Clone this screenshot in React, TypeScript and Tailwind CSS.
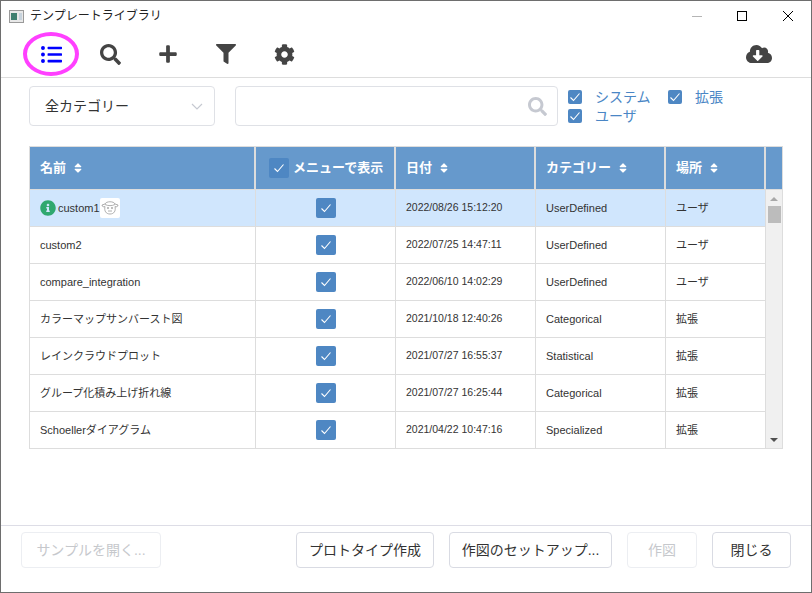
import React from 'react';
import { FaListUl, FaSearch, FaPlus, FaFilter, FaCog, FaCloudDownloadAlt, FaSort, FaInfoCircle } from 'react-icons/fa';

interface Template {
  name: string;
  date: string;
  category: string;
  place: string;
}

const templates: Template[] = [
  { name: 'custom1', date: '2022/08/26 15:12:20', category: 'UserDefined', place: 'ユーザ' },
  { name: 'custom2', date: '2022/07/25 14:47:11', category: 'UserDefined', place: 'ユーザ' },
  { name: 'compare_integration', date: '2022/06/10 14:02:29', category: 'UserDefined', place: 'ユーザ' },
  { name: 'カラーマップサンバースト図', date: '2021/10/18 12:40:26', category: 'Categorical', place: '拡張' },
  { name: 'レインクラウドプロット', date: '2021/07/27 16:55:37', category: 'Statistical', place: '拡張' },
  { name: 'グループ化積み上げ折れ線', date: '2021/07/27 16:25:44', category: 'Categorical', place: '拡張' },
  { name: 'Schoellerダイアグラム', date: '2021/04/22 10:47:16', category: 'Specialized', place: '拡張' },
];

const Check = ({ size }: { size: string }) => (
  <span className={`${size} flex shrink-0 items-center justify-center rounded-[2px] bg-[#4e87c3]`}>
    <svg viewBox="0 0 12 12" className="h-3 w-3" fill="none" stroke="white" strokeWidth="1.1">
      <path d="M1.5 6.5 L4.5 9.5 L10.5 2.5" />
    </svg>
  </span>
);

const FilterOption = ({ label }: { label: string }) => (
  <label className="flex h-[19px] items-center">
    <Check size="h-[14px] w-[14px]" />
    <span className="ml-[13px] text-[14px] leading-[14px] text-[#4a86c5]">{label}</span>
  </label>
);

const SheepIcon = () => (
  <span className="flex h-5 w-5 items-center justify-center rounded-[2px] bg-white">
    <svg viewBox="0 0 20 20" className="h-5 w-5" fill="none" stroke="#9a9a9a" strokeWidth="0.8">
      <path d="M5 6 C6 3 14 3 15 6 L18 7 C18 9 16 9 15 8.5 C16 13 14 16 10 16 C6 16 4 13 5 8.5 C4 9 2 9 2 7 Z" />
      <circle cx="8" cy="10" r="0.7" />
      <circle cx="12" cy="10" r="0.7" />
      <path d="M8 13 H12 M5 6.5 C8 8 12 8 15 6.5" />
    </svg>
  </span>
);

const HeaderCell = ({ label, className }: { label: string; className: string }) => (
  <div className={`${className} flex items-center border-r-2 border-[#dddddd] pl-[10px]`}>
    <span>{label}</span>
    <FaSort className="ml-[6px] text-[12px]" />
  </div>
);

const FooterButton = ({ label, width, disabled }: { label: string; width: string; disabled?: boolean }) => (
  <button
    className={`${width} h-9 rounded-[4px] border text-[14px] ${
      disabled ? 'border-[#eceef2] text-[#c6c8cc]' : 'border-[#d9dbe3] text-[#333333]'
    }`}
  >
    {label}
  </button>
);

export default function App() {
  return (
    <div className="flex h-[593px] w-[812px] flex-col border border-[#6e6e6e] bg-white font-['Liberation_Sans','Noto_Sans_CJK_JP',sans-serif] text-[#333333]">
      {/* title bar */}
      <div className="flex h-[30px] shrink-0 items-center pl-2">
        <svg viewBox="0 0 15 13" className="h-[13px] w-[15px]">
          <rect x="0.5" y="0.5" width="14" height="12" fill="#e8e8e8" stroke="#9a9a9a" />
          <rect x="2" y="3" width="6" height="7" fill="#3f7f6f" />
          <rect x="10" y="3" width="3" height="7" fill="#c7d3dd" />
        </svg>
        <span className="ml-[6px] text-[12px] text-[#222222]">テンプレートライブラリ</span>
        <div className="ml-auto flex items-center">
          <div className="h-px w-[10px] bg-[#b5b5b5]" />
          <div className="ml-[35px] h-[10px] w-[10px] border border-black" />
          <svg viewBox="0 0 10 10" className="mr-[18px] ml-[36px] h-[10px] w-[10px]" stroke="black" strokeWidth="1">
            <path d="M0 0 L10 10 M10 0 L0 10" />
          </svg>
        </div>
      </div>

      {/* toolbar */}
      <div className="relative flex h-[47px] shrink-0 items-center border-b border-[#dddddd] text-[#444444]">
        <div className="absolute top-[1px] left-[22px] h-[44px] w-[56px] rounded-[50%] border-[4px] border-[#ff40ff]" />
        <FaListUl className="ml-[40px] text-[21px] text-[#0000ff]" />
        <FaSearch className="ml-[38px] text-[21px]" />
        <FaPlus className="ml-[37px] text-[20px]" />
        <FaFilter className="ml-[38px] text-[20px]" />
        <FaCog className="ml-[38px] text-[21px]" />
        <FaCloudDownloadAlt className="mr-[39px] ml-auto text-[26px]" />
      </div>

      {/* filters */}
      <div className="flex shrink-0 pt-2 pl-[28px]">
        <div className="flex h-10 w-[186px] items-center justify-between rounded-[4px] border border-[#dfe1e6] pr-[11px] pl-[15px] text-[14px]">
          <span>全カテゴリー</span>
          <svg viewBox="0 0 12 7" className="h-[7px] w-3" fill="none" stroke="#c6c9d1" strokeWidth="1.2">
            <path d="M1 1 L6 6 L11 1" />
          </svg>
        </div>
        <div className="ml-5 flex h-10 w-[323px] items-center justify-end rounded-[4px] border border-[#dfe1e6] pr-[10px]">
          <FaSearch className="text-[19px] text-[#c6c9d1]" />
        </div>
        <div className="ml-[10px] grid w-[160px] grid-cols-[100px_60px] pt-[1px]">
          <FilterOption label="システム" />
          <FilterOption label="拡張" />
          <FilterOption label="ユーザ" />
        </div>
      </div>

      {/* table */}
      <div className="mt-5 ml-[28px] w-[754px] shrink-0 border border-[#dddddd] text-[11px]">
        <div className="flex h-[42px] bg-[#6699cc] text-[13px] font-bold text-white">
          <HeaderCell label="名前" className="w-[226px]" />
          <div className="flex w-[140px] items-center border-r-2 border-[#dddddd] pl-[13px]">
            <Check size="h-5 w-5" />
            <span className="ml-[4px]">メニューで表示</span>
          </div>
          <HeaderCell label="日付" className="w-[140px]" />
          <HeaderCell label="カテゴリー" className="w-[130px]" />
          <HeaderCell label="場所" className="w-[100px]" />
        </div>
        <div className="flex h-[259px] overflow-hidden">
          <div className="w-[736px] shrink-0">
            {templates.map((t, i) => (
              <div key={t.name} className={`flex h-[37px] border-t border-[#dddddd] ${i === 0 ? 'bg-[#d0e6fd]' : ''}`}>
                <div className="flex w-[226px] items-center border-r border-[#dddddd] pl-[10px]">
                  {i === 0 && <FaInfoCircle className="mr-[2px] text-[16px] text-[#2fa86f]" />}
                  <span>{t.name}</span>
                  {i === 0 && <SheepIcon />}
                </div>
                <div className="flex w-[140px] items-center justify-center border-r border-[#dddddd]">
                  <Check size="h-5 w-5" />
                </div>
                <div className="flex w-[140px] items-center border-r border-[#dddddd] pl-[10px] text-[10.5px]">{t.date}</div>
                <div className="flex w-[130px] items-center border-r border-[#dddddd] pl-[10px]">{t.category}</div>
                <div className="flex w-[100px] items-center border-r border-[#dddddd] pl-[10px]">{t.place}</div>
              </div>
            ))}
          </div>
          <div className="flex flex-1 flex-col items-center border-t border-[#dddddd] bg-[#f0f0f0]">
            <div className="mt-[7px] h-0 w-0 border-x-[4px] border-b-[4px] border-x-transparent border-b-[#a8a8a8]" />
            <div className="mt-[5px] h-[17px] w-[13px] bg-[#bcbcbc]" />
            <div className="mt-auto mb-[6px] h-0 w-0 border-x-[4px] border-t-[4px] border-x-transparent border-t-[#505050]" />
          </div>
        </div>
      </div>

      <div className="flex-1" />

      {/* footer */}
      <div className="flex h-[67px] shrink-0 gap-[15px] border-t border-[#dddde6] pt-[6px] pr-5 pl-5">
        <FooterButton label="サンプルを開く..." width="w-[140px]" disabled />
        <div className="flex-1" />
        <FooterButton label="プロトタイプ作成" width="w-[138px]" />
        <FooterButton label="作図のセットアップ..." width="w-[163px]" />
        <FooterButton label="作図" width="w-[70px]" disabled />
        <FooterButton label="閉じる" width="w-[79px]" />
      </div>
    </div>
  );
}
